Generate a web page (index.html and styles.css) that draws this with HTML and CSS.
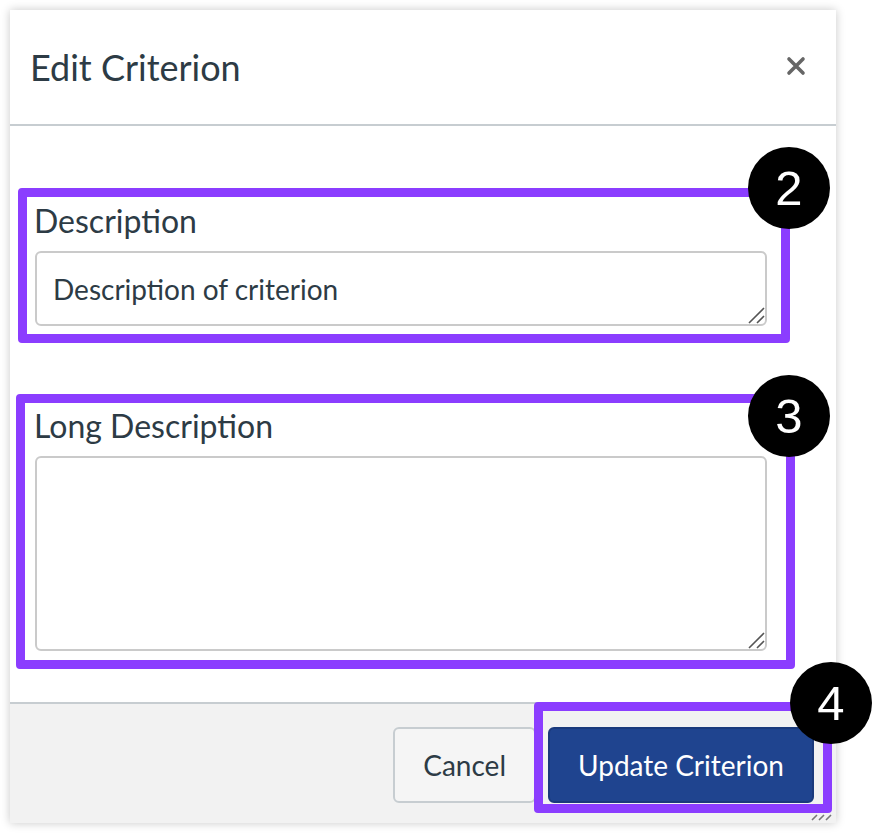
FILE: index.html
```html
<!DOCTYPE html>
<html>
<head>
<meta charset="utf-8">
<link rel="stylesheet" href="styles.css">
</head>
<body>
<div class="page">
  <div class="dialog">
    <div class="header">
      <h1 class="title">Edit Criterion</h1>
      <svg class="close" width="20" height="20" viewBox="0 0 20 20"><path d="M3 3 L17 17 M17 3 L3 17" stroke="#666" stroke-width="3.6" stroke-linecap="round"/></svg>
    </div>
    <div class="body">
      <div class="field field-short">
        <label class="label">Description</label>
        <div class="input-wrap">
          <textarea class="input input-short">Description of criterion</textarea>
          <svg class="tgrip" width="18" height="18" viewBox="0 0 18 18"><path d="M2 17 L17 2 M10 17 L17 10" stroke="#555" stroke-width="1.6"/></svg>
        </div>
      </div>
      <div class="field">
        <label class="label">Long Description</label>
        <div class="input-wrap">
          <textarea class="input input-long"></textarea>
          <svg class="tgrip" width="18" height="18" viewBox="0 0 18 18"><path d="M2 17 L17 2 M10 17 L17 10" stroke="#555" stroke-width="1.6"/></svg>
        </div>
      </div>
    </div>
    <div class="footer">
      <button class="btn btn-cancel">Cancel</button>
      <button class="btn btn-primary">Update Criterion</button>
    </div>
    <svg class="grip" width="22" height="8" viewBox="0 0 22 8"><path d="M1 7 L6 2 M8 7 L13 2 M15 7 L20 2" stroke="#777" stroke-width="1.6"/></svg>
  </div>

  <div class="mark mark-1"></div>
  <div class="mark mark-2"></div>
  <div class="mark mark-3"></div>
  <div class="badge badge-2">2</div>
  <div class="badge badge-3">3</div>
  <div class="badge badge-4">4</div>
</div>
</body>
</html>
```

FILE: styles.css
```css
html, body {
  margin: 0;
  padding: 0;
  background: #ffffff;
}

.page {
  position: relative;
  width: 872px;
  height: 834px;
  padding: 10px;
  box-sizing: border-box;
  font-family: Lato, "Open Sans", sans-serif;
  color: #2d3b45;
  overflow: hidden;
}

.dialog {
  position: relative;
  width: 826px;
  height: 813px;
  background: #ffffff;
  box-shadow: 0 0 9px rgba(0, 0, 0, 0.22);
  display: flex;
  flex-direction: column;
}

.header {
  height: 114px;
  border-bottom: 2px solid #c7cdd1;
  display: flex;
  align-items: center;
  justify-content: space-between;
  padding: 0 30px 0 20px;
  flex: none;
}

.title {
  margin: 0;
  font-size: 36px;
  font-weight: 400;
  line-height: 44px;
  color: #2d3b45;
}

.close {
  display: block;
  margin-top: -2px;
}

.body {
  flex: 1;
  padding: 75px 0 0 25px;
}

.field {
  display: flex;
  flex-direction: column;
  align-items: flex-start;
}

.field-short {
  margin-bottom: 80px;
}

.label {
  display: block;
  font-size: 32px;
  line-height: 40px;
  height: 40px;
  color: #2d3b45;
  margin: 0 0 10px -1px;
}

.input-wrap {
  position: relative;
}

.input {
  display: block;
  width: 732px;
  box-sizing: border-box;
  border: 2px solid #cacaca;
  border-radius: 6px;
  font-family: Lato, "Open Sans", sans-serif;
  font-size: 28px;
  line-height: 36px;
  color: #2d3b45;
  padding: 18px 16px 8px 16px;
  margin: 0;
  outline: none;
  resize: none;
  background: #ffffff;
}

.input-short {
  height: 75px;
  overflow: hidden;
}

.input-long {
  height: 195px;
}

.tgrip {
  position: absolute;
  right: 2px;
  bottom: 2px;
}

.footer {
  flex: none;
  height: 121px;
  box-sizing: border-box;
  border-top: 2px solid #c7cdd1;
  background: #f2f2f2;
  display: flex;
  align-items: center;
  justify-content: flex-end;
  gap: 12px;
  padding: 2px 22px 0 0;
}

.btn {
  height: 76px;
  box-sizing: border-box;
  border-radius: 6px;
  font-family: Lato, "Open Sans", sans-serif;
  font-size: 28px;
  padding: 0 28px;
  white-space: nowrap;
  cursor: pointer;
}

.btn-cancel {
  background: #f5f5f5;
  border: 2px solid #c7cdd1;
  color: #2d3b45;
}

.btn-primary {
  background: #1f448f;
  border: 2px solid #1a3a7c;
  color: #ffffff;
  width: 266px;
}

.grip {
  position: absolute;
  right: 3px;
  bottom: 2px;
}

.mark {
  position: absolute;
  border: 9px solid #8b3dff;
  border-radius: 4px;
  box-sizing: border-box;
}

.mark-1 {
  left: 18px;
  top: 188px;
  width: 772px;
  height: 155px;
}

.mark-2 {
  left: 16px;
  top: 394px;
  width: 779px;
  height: 275px;
}

.mark-3 {
  left: 534px;
  top: 702px;
  width: 298px;
  height: 111px;
}

.badge {
  position: absolute;
  width: 82px;
  height: 82px;
  border-radius: 50%;
  background: #000000;
  color: #ffffff;
  font-family: "Liberation Sans", Arial, sans-serif;
  font-size: 49px;
  line-height: 82px;
  text-align: center;
}

.badge-2 {
  left: 748px;
  top: 147px;
}

.badge-3 {
  left: 748px;
  top: 375px;
}

.badge-4 {
  left: 790px;
  top: 662px;
}
```
